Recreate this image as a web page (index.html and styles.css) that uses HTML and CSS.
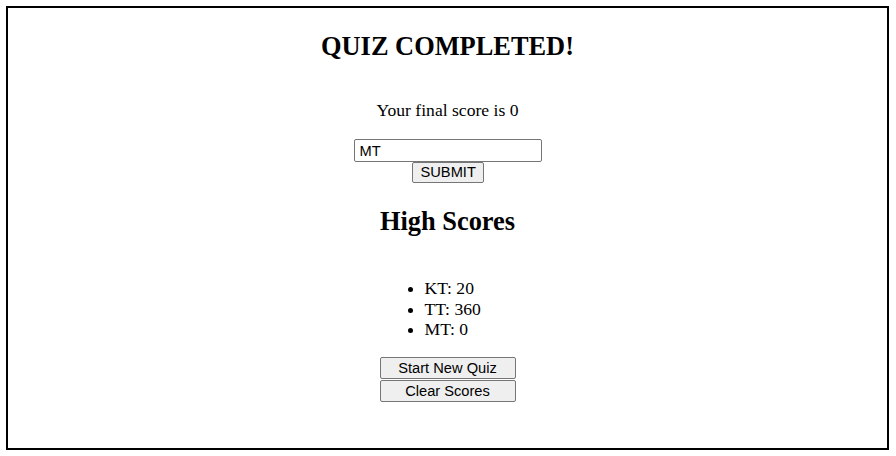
FILE: index.html
```html
<!DOCTYPE html>
<html lang="en">
<head>
<meta charset="utf-8">
<title>Quiz Completed</title>
<link rel="stylesheet" href="styles.css">
</head>
<body>
<main class="frame">
  <h2 class="title">QUIZ COMPLETED!</h2>
  <p class="score">Your final score is 0</p>
  <form class="entry">
    <input class="initials" type="text" value="MT">
    <button class="btn submit" type="button">SUBMIT</button>
  </form>
  <h2 class="title hs-title">High Scores</h2>
  <ul class="scores">
    <li>KT: 20</li>
    <li>TT: 360</li>
    <li>MT: 0</li>
  </ul>
  <div class="actions">
    <button class="btn wide" type="button">Start New Quiz</button>
    <button class="btn wide second" type="button">Clear Scores</button>
  </div>
</main>
</body>
</html>
```

FILE: styles.css
```css
html, body {
  margin: 0;
  padding: 0;
  background: #fff;
}

.frame {
  margin: 6px;
  width: 879px;
  height: 440px;
  border: 2px solid #000;
  font-family: "Liberation Serif", "Times New Roman", serif;
  font-size: 17.6px;
  color: #000;
  text-align: center;
}

.title {
  font-size: 26.4px;
  font-weight: bold;
  line-height: 30px;
  margin: 23px 0 0;
}

.score {
  margin: 39px 0 19px;
  line-height: 20px;
}

.entry {
  display: flex;
  flex-direction: column;
  align-items: center;
  margin: 0;
}

.initials {
  box-sizing: border-box;
  width: 188px;
  height: 23px;
  margin: 0;
  padding: 1px 5px;
  border: 1px solid #767676;
  border-radius: 2px;
  font-family: "Liberation Sans", Arial, sans-serif;
  font-size: 14.67px;
  color: #000;
  background: #fff;
}

.btn {
  box-sizing: border-box;
  margin: 0;
  padding: 0 8px;
  border: 1px solid #767676;
  border-radius: 2px;
  background: #efefef;
  font-family: "Liberation Sans", Arial, sans-serif;
  font-size: 14.67px;
  color: #000;
  line-height: 17px;
}

.submit {
  width: 72px;
  height: 21px;
}

.hs-title {
  margin-top: 23px;
}

.scores {
  width: 90px;
  margin: 42px auto 0;
  padding: 0 0 0 44px;
  text-align: left;
  line-height: 20.7px;
}

.actions {
  display: flex;
  flex-direction: column;
  align-items: center;
  margin-top: 17px;
}

.wide {
  width: 136px;
  height: 22px;
}

.second {
  margin-top: 1px;
}
```
